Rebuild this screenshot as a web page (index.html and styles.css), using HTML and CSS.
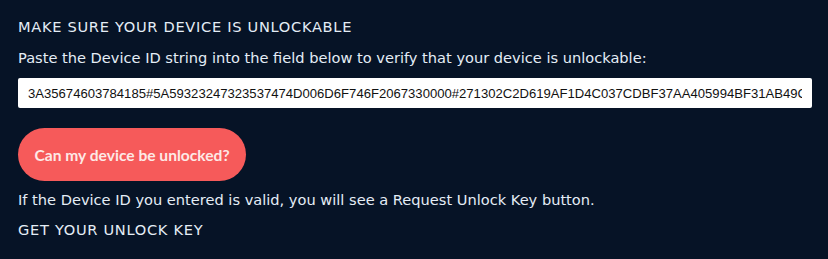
FILE: index.html
```html
<!DOCTYPE html>
<html>
<head>
<meta charset="utf-8">
<link rel="stylesheet" href="styles.css">
</head>
<body>
<div class="page">
  <h2 class="heading">MAKE SURE YOUR DEVICE IS UNLOCKABLE</h2>
  <p class="text">Paste the Device ID string into the field below to verify that your device is unlockable:</p>
  <input class="field" type="text" value="3A35674603784185#5A59323247323537474D006D6F746F2067330000#271302C2D619AF1D4C037CDBF37AA405994BF31AB49C">
  <div class="actions"><button class="btn">Can my device be unlocked?</button></div>
  <p class="text">If the Device ID you entered is valid, you will see a Request Unlock Key button.</p>
  <h2 class="heading">GET YOUR UNLOCK KEY</h2>
</div>
</body>
</html>
```
FILE: styles.css
```css
html, body {
  margin: 0;
  padding: 0;
  background: #061326;
}
.page {
  width: 828px;
  height: 259px;
  box-sizing: border-box;
  padding: 17px 16px 0 18px;
  display: flex;
  flex-direction: column;
  align-items: flex-start;
  font-family: "DejaVu Sans", sans-serif;
  color: #e4edf6;
}
.heading {
  margin: 0;
  font-size: 14.6px;
  font-weight: normal;
  line-height: 20px;
  letter-spacing: 0.7px;
}
.text {
  margin: 11px 0 0;
  font-size: 14.6px;
  line-height: 20px;
}
.field {
  margin-top: 10px;
  width: 794px;
  height: 30px;
  box-sizing: border-box;
  border: none;
  border-radius: 2px;
  padding: 0 10px;
  font-family: "Liberation Sans", Arial, sans-serif;
  font-size: 13.1px;
  color: #111;
  background: #fff;
  outline: none;
}
.actions {
  margin-top: 20px;
}
.btn {
  height: 53px;
  width: 228px;
  border: none;
  border-radius: 27px;
  background: #f65a5a;
  color: #fde9e6;
  font-family: Lato, sans-serif;
  font-weight: 700;
  font-size: 15.6px;
  padding: 0;
}
.actions + .text {
  margin-top: 9px;
}
.text + .heading {
  margin-top: 10px;
}
```
